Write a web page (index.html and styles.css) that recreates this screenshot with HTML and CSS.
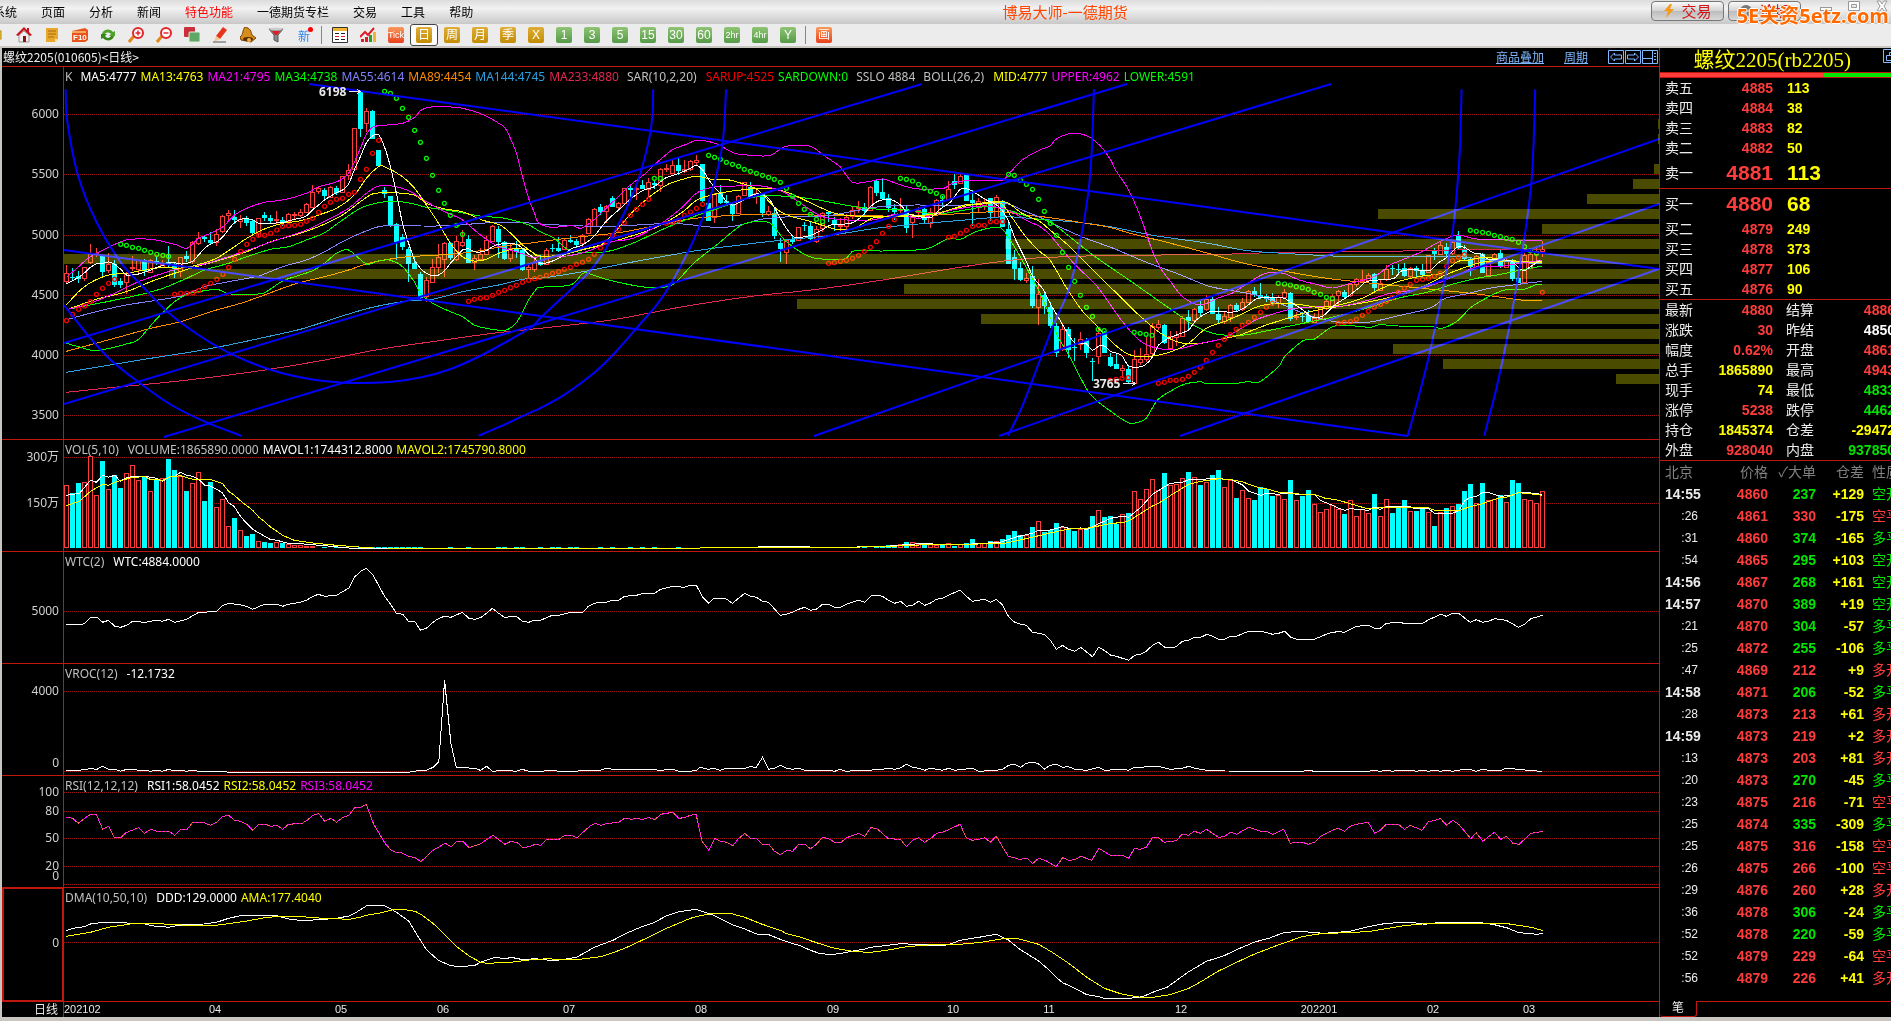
FILE: index.html
```
<!DOCTYPE html>
<html lang="zh-CN">
<head>
<meta charset="UTF-8">
<meta name="viewport" content="width=device-width, initial-scale=1.0">
<title>博易大师-一德期货</title>
<link rel="stylesheet" href="styles.css">
</head>
<body>

<header class="menubar">
    <nav class="menu">
        <button>系统</button>
        <button>页面</button>
        <button>分析</button>
        <button>新闻</button>
        <button class="hot">特色功能</button>
        <button>一德期货专栏</button>
        <button>交易</button>
        <button>工具</button>
        <button>帮助</button>
    </nav>
    <div class="app-title">博易大师-一德期货</div>
    <div class="top-buttons">
        <button class="pill"><svg width="12" height="16" viewBox="0 0 12 16"><path d="M7 1 1 8h4L3 15l8-9H7l2-5z" fill="#f59a1a"/></svg>交易</button>
        <button class="pill"><svg width="14" height="14" viewBox="0 0 14 14"><circle cx="7" cy="7" r="6" fill="#777"/><path d="M3 7h8M7 4v6" stroke="#ddd"/></svg>论坛</button>
    </div>
    <div class="window-buttons">
        <button aria-label="最小化"><svg width="14" height="12" viewBox="0 0 14 12"><rect x="1.5" y="7.5" width="11" height="3" fill="#fff" stroke="#999"/></svg></button>
        <button aria-label="最大化"><svg width="14" height="12" viewBox="0 0 14 12"><path d="M1.500 1.500h11v9h-11zM4.500 4.500h5v3h-5z" fill="#fff" fill-rule="evenodd" stroke="#999"/></svg></button>
        <button aria-label="关闭"><svg width="14" height="12" viewBox="0 0 14 12"><path d="M2 1h3l2 3 2-3h3L9 6l3 5H9L7 8l-2 3H2l3-5z" fill="#fff" stroke="#999"/></svg></button>
    </div>
    <div class="watermark">5E关资5etz.com</div>
</header>

<div class="toolbar">
    <button class="tool" aria-label="打开"><svg width="16" height="16"><rect x="1" y="4" width="12" height="8" fill="#f2c53d" stroke="#b98a10"/></svg></button>
    <button class="tool" aria-label="首页"><svg width="16" height="16"><path d="M3 8v7h10V8L8 4z" fill="#eee" stroke="#999"/><path d="M0 8 8 0l3 3V1h2v4l3 3-2 1-6-6-6 6z" fill="#c8131c"/><path d="M7 9h3v6H7z" fill="#8c1016"/></svg></button>
    <button class="tool" aria-label="公告"><svg width="16" height="16"><path d="M2 1h12v11l-3 3H2z" fill="#e8a82c"/><path d="M4 4h8M4 7h8M4 10h6" stroke="#a86c08"/><path d="M14 12h-3v3z" fill="#fbe2a0"/></svg></button>
    <button class="tool" aria-label="F10资料"><svg width="16" height="16"><path d="M0 4l13-3 3 2v10l-3 2H0z" fill="#e8541c"/><path d="M0 4h14v2H0z" fill="#f7a860"/><text x="1" y="13" class="icon-f10">F10</text></svg></button>
    <button class="tool" aria-label="刷新"><svg width="16" height="16"><path d="M2 7c1-5 8-6 11-2l2-1v5H9l2-2C9 5 6 5 5 7z" fill="#4fa52c"/><path d="M14 9c-1 5-8 6-11 2l-2 1V7h6L5 9c2 3 5 2 6 0z" fill="#348718"/></svg></button>
    <button class="tool" aria-label="放大"><svg width="16" height="16"><path d="M1 15l5-6" stroke="#e08a1c" stroke-width="3"/><circle cx="10" cy="6" r="5" fill="#fff" stroke="#e3262b" stroke-width="2"/><path d="M10 3.500v5M7.500 6h5" stroke="#e3262b" stroke-width="1.500"/></svg></button>
    <button class="tool" aria-label="缩小"><svg width="16" height="16"><path d="M1 15l5-6" stroke="#e08a1c" stroke-width="3"/><circle cx="10" cy="6" r="5" fill="#fff" stroke="#e3262b" stroke-width="2"/><path d="M7.500 6h5" stroke="#e3262b" stroke-width="1.500"/></svg></button>
    <button class="tool" aria-label="叠加"><svg width="16" height="16"><rect x="0" y="0" width="11" height="10" rx="1" fill="#cc2f3a"/><rect x="5" y="5" width="11" height="10" rx="1" fill="#5fa866" stroke="#ddeedd"/></svg></button>
    <button class="tool" aria-label="画线"><svg width="16" height="16"><path d="M4 9 11 0l4 3-7 9z" fill="#e8341c"/><path d="M4 9l4 3-6 3z" fill="#f4c98c"/><path d="M1 15h13" stroke="#555"/></svg></button>
    <button class="tool" aria-label="预警"><svg width="16" height="16"><path d="M5 0c5 1 6 4 7 8l4 3-5 4-10-2-1-3c4-3 2-7 5-10z" fill="#d58e1c" stroke="#7a4306"/><ellipse cx="8" cy="12" rx="5" ry="2" fill="#5d2d05"/><circle cx="9" cy="13" r="2" fill="#f5b53a"/></svg></button>
    <button class="tool" aria-label="筛选"><svg width="16" height="16"><path d="M1 2h14l-5 6v7l-4-2V8z" fill="#888" stroke="#555"/><path d="M4 4h8L9 8H7z" fill="#e01c24"/><ellipse cx="8" cy="2" rx="7" ry="1.500" fill="#ccc"/></svg></button>
    <button class="tool new">新</button>
    <span class="sep"></span>
    <button class="tool" aria-label="报价"><svg width="16" height="16"><path d="M.5.500h15v15H.500z" fill="#fff" stroke="#333"/><path d="M1 1h14v3H1z" fill="#f0b52c"/><path d="M3 6.500h4M3 12.500h4M9 6.500h4M9 12.500h4" stroke="#222"/><path d="M3 9.500h4M9 9.500h4" stroke="#e01c24"/></svg></button>
    <button class="tool" aria-label="分时"><svg width="16" height="16"><path d="M1 15v-3h3v3zM5 15v-5h3v5z" fill="#e01c24"/><path d="M9 15V8h3v7z" fill="#2f9b2f"/><path d="M13 15V5h3v10z" fill="#f0b52c"/><path d="M0 10l5-5 3 3 6-7" fill="none" stroke="#e01c24" stroke-width="2"/></svg></button>
    <button class="tool"><span class="key red narrow">Tick</span></button>
    <button class="tool selected"><span class="key gold">日</span></button>
    <button class="tool"><span class="key gold">周</span></button>
    <button class="tool"><span class="key gold">月</span></button>
    <button class="tool"><span class="key gold">季</span></button>
    <button class="tool"><span class="key gold">X</span></button>
    <button class="tool"><span class="key green">1</span></button>
    <button class="tool"><span class="key green">3</span></button>
    <button class="tool"><span class="key green">5</span></button>
    <button class="tool"><span class="key green">15</span></button>
    <button class="tool"><span class="key green">30</span></button>
    <button class="tool"><span class="key green">60</span></button>
    <button class="tool"><span class="key green narrow">2hr</span></button>
    <button class="tool"><span class="key green narrow">4hr</span></button>
    <button class="tool"><span class="key green">Y</span></button>
    <span class="sep"></span>
    <button class="tool"><span class="key red">画</span></button>
</div>

<main class="workspace">
    <section class="charts">
        <div class="chart-title">
            <span>螺纹2205(010605)&lt;日线&gt;</span>
            <a class="overlay-link" href="#">商品叠加</a>
            <a class="period-link" href="#">周期</a>
            <div class="nav-icons">
                <button aria-label="上一个"><svg width="16" height="14"><path d="M.5.500h15v13H.500zM2.500 7l4-4v2h7v4h-7v2z"/></svg></button>
                <button aria-label="下一个"><svg width="16" height="14"><path d="M.5.500h15v13H.500zM13.500 7l-4-4v2h-7v4h7v2z"/></svg></button>
                <button aria-label="布局"><svg width="16" height="14"><path d="M.5.500h15v13H.500zM.5 8.500h10M10.500.500v13M12 3.500h2M12 6.500h2M12 9.500h2"/></svg></button>
            </div>
        </div>

        <div class="panel price">
            <svg class="axis" id="price-axis"></svg>
            <div class="plot">
                <svg id="price"></svg>
                <div class="legend">
                    <span class="gray">K</span>
                    <span class="white lead">MA5:4777</span>
                    <span class="yellow">MA13:4763</span>
                    <span class="magenta">MA21:4795</span>
                    <span class="lime">MA34:4738</span>
                    <span class="violet">MA55:4614</span>
                    <span class="orange">MA89:4454</span>
                    <span class="azure">MA144:4745</span>
                    <span class="crimson">MA233:4880</span>
                    <span class="gray lead params">SAR(10,2,20)</span>
                    <span class="pure-red">SARUP:4525</span>
                    <span class="lime">SARDOWN:0</span>
                    <span class="gray lead">SSLO 4884</span>
                    <span class="gray lead params">BOLL(26,2)</span>
                    <span class="yellow">MID:4777</span>
                    <span class="magenta">UPPER:4962</span>
                    <span class="lime">LOWER:4591</span>
                </div>
            </div>
        </div>

        <div class="panel">
            <svg class="axis" id="vol-axis"></svg>
            <div class="plot">
                <svg id="vol"></svg>
                <div class="legend">
                    <span class="gray params">VOL(5,10)</span>
                    <span class="gray">VOLUME:1865890.0000</span>
                    <span class="white">MAVOL1:1744312.8000</span>
                    <span class="yellow">MAVOL2:1745790.8000</span>
                </div>
            </div>
        </div>

        <div class="panel">
            <svg class="axis" id="wtc-axis"></svg>
            <div class="plot">
                <svg id="wtc"></svg>
                <div class="legend">
                    <span class="gray params">WTC(2)</span>
                    <span class="white">WTC:4884.0000</span>
                </div>
            </div>
        </div>

        <div class="panel">
            <svg class="axis" id="vroc-axis"></svg>
            <div class="plot">
                <svg id="vroc"></svg>
                <div class="legend">
                    <span class="gray params">VROC(12)</span>
                    <span class="white">-12.1732</span>
                </div>
            </div>
        </div>

        <div class="panel">
            <svg class="axis" id="rsi-axis"></svg>
            <div class="plot">
                <svg id="rsi"></svg>
                <div class="legend">
                    <span class="gray params">RSI(12,12,12)</span>
                    <span class="white">RSI1:58.0452</span>
                    <span class="yellow">RSI2:58.0452</span>
                    <span class="magenta">RSI3:58.0452</span>
                </div>
            </div>
        </div>

        <div class="panel dma active">
            <svg class="axis" id="dma-axis"></svg>
            <div class="plot">
                <svg id="dma"></svg>
                <div class="legend">
                    <span class="gray params">DMA(10,50,10)</span>
                    <span class="white">DDD:129.0000</span>
                    <span class="yellow">AMA:177.4040</span>
                </div>
            </div>
        </div>

        <div class="dates">
            <span class="dates-name">日线</span>
            <svg id="dates"></svg>
        </div>
    </section>

    <aside class="quote">
        <div class="quote-title">
            <h1>螺纹2205(rb2205)</h1>
            <svg width="16" height="14"><path d="M.5.500h15v13H.500zM3.500 11.500v-5h9v5zM6.500 6.500v-3h5"/></svg>
        </div>
        <div class="ratio"><span></span></div>

        <div class="book" id="asks"></div>
        <div class="book" id="bids"></div>
        <div class="stats" id="stats"></div>

        <table class="ticks">
            <thead>
                <tr><th class="time">北京</th><th class="deal">价格</th><th class="size">✓大单</th><th class="diff">仓差</th><th class="kind">性质</th></tr>
            </thead>
            <tbody id="ticks"></tbody>
        </table>

        <div class="tabs">
            <button class="tab">笔</button>
        </div>
    </aside>
</main>

<script src="chart.js"></script>
</body>
</html>
```
FILE: styles.css
```
* {
    box-sizing: border-box;
}

body {
    margin: 0;
    background-color: #c9c5c1;
    font-family: 'Noto Sans', 'Noto Sans CJK SC', sans-serif;
    font-size: 12px;
    overflow: hidden;
}

button {
    border: 0;
    padding: 0;
    margin: 0;
    background: none;
    font-family: inherit;
    font-size: inherit;
    color: inherit;
}

svg {
    display: block;
}

/* menu */

.menubar {
    position: relative;
    display: flex;
    align-items: center;
    height: 24px;
    background: linear-gradient(#dcdcdc, #f2f2f2 35%, #c8c8c8);
}

.menu {
    display: flex;
    gap: 24px;
    margin-left: -7px;
    font-family: 'Noto Sans CJK SC', sans-serif;
    color: #000;
}

.menu button {
    line-height: 24px;
}

.menu .hot {
    color: #ff0000;
}

.app-title {
    flex: 1;
    padding-left: 6px;
    text-align: center;
    font-family: 'Noto Sans CJK SC', sans-serif;
    font-size: 15px;
    line-height: 24px;
    color: #ff4500;
}

.top-buttons {
    display: flex;
    gap: 4px;
    align-self: flex-start;
    padding-top: 1px;
    margin-right: 18px;
}

.pill {
    display: flex;
    align-items: center;
    justify-content: center;
    gap: 6px;
    width: 73px;
    height: 20px;
    border: 1px solid #777;
    border-radius: 4px;
    background: linear-gradient(#fafafa, #d2d2d2 50%, #bdbdbd 52%, #d8d8d8);
    font-family: 'Noto Sans CJK SC', sans-serif;
    font-size: 15px;
    line-height: 18px;
    color: #d01818;
}

.window-buttons {
    display: flex;
    gap: 14px;
    align-self: flex-start;
    padding-right: 2px;
}

.watermark {
    position: absolute;
    right: 2px;
    top: 2px;
    font-family: 'Open Sans', 'Noto Sans CJK SC', sans-serif;
    font-size: 20px;
    line-height: 28px;
    font-weight: bold;
    color: #ff6a00;
    text-shadow: 1px 0 #fff, -1px 0 #fff, 0 1px #fff, 0 -1px #fff;
}

/* toolbar */

.toolbar {
    display: flex;
    align-items: center;
    height: 24px;
    margin-left: -18px;
    background-color: #ececec;
    border-bottom: 2px solid #c9c5c1;
}

.tool {
    display: flex;
    align-items: center;
    justify-content: center;
    width: 28px;
    height: 22px;
}

.tool.selected {
    border: 1px solid #444;
    border-radius: 3px;
    background-color: #fff;
}

.tool.new {
    position: relative;
    font-family: 'Noto Sans CJK SC', sans-serif;
    color: #2f86e8;
}

.tool.new::after {
    content: '';
    position: absolute;
    right: 5px;
    top: 3px;
    width: 5px;
    height: 5px;
    border-radius: 50%;
    background-color: #ff0000;
}

.sep {
    width: 1px;
    height: 18px;
    margin: 0 4px 0 3px;
    background-color: #888;
}

.key {
    display: flex;
    align-items: center;
    justify-content: center;
    width: 16px;
    height: 16px;
    border-radius: 2px;
    font-family: 'Liberation Sans', 'Noto Sans CJK SC', sans-serif;
    line-height: 16px;
    color: #fff;
}

.key.narrow {
    font-size: 9px;
}

.gold {
    background: linear-gradient(#dfae38, #c28c04);
}

.green {
    background: linear-gradient(#8fc474, #559a48);
}

.red {
    background: linear-gradient(#f99a5c, #e8401c);
}

.icon-f10 {
    font-family: 'Liberation Sans', sans-serif;
    font-size: 8px;
    font-weight: bold;
    fill: #fff;
}

/* charts */

.workspace {
    display: flex;
    padding-left: 2px;
    padding-bottom: 4px;
}

.charts {
    flex: 1;
    min-width: 0;
    background-color: #000;
}

.chart-title {
    display: flex;
    align-items: center;
    height: 18px;
    padding: 0 1px;
    font-family: 'Noto Sans CJK SC', sans-serif;
    line-height: 18px;
    color: #f0f0f0;
}

.overlay-link {
    margin-left: auto;
}

.chart-title a {
    color: #80b8ff;
    margin-right: 20px;
}

.nav-icons {
    display: flex;
    gap: 1px;
}

.nav-icons path,
.quote-title path {
    fill: none;
    stroke: #80b8ff;
}

.panel {
    display: flex;
    height: 112px;
    border-top: 1px solid #c01810;
}

.panel.price {
    height: 373px;
}

.panel.dma {
    height: 114px;
}

.axis {
    width: 62px;
    height: 100%;
    border-right: 1px solid #c01810;
}

.active .axis {
    border: 2px solid #c01810;
    border-top-width: 1px;
    border-bottom-width: 1px;
}

.plot {
    position: relative;
    flex: 1;
    min-width: 0;
}

.plot > svg {
    width: 100%;
    height: 100%;
    shape-rendering: crispEdges;
}

.legend {
    position: absolute;
    left: 1px;
    top: 1px;
    display: flex;
    gap: 4px;
    line-height: 18px;
    white-space: nowrap;
}

.legend .lead {
    margin-left: 4px;
}

.legend .params {
    margin-right: 5px;
}

.axis text {
    font-size: 12px;
    fill: #d0d0d0;
    text-anchor: end;
}

.callout {
    font-size: 12px;
    font-weight: bold;
    fill: #e8e8e8;
}

.arrow {
    stroke: #e8e8e8;
    fill: none;
}

.grid {
    stroke: #a01010;
    stroke-dasharray: 1 1;
}

.up {
    fill: #000;
    stroke: #ff3c3c;
}

.up-wick {
    fill: #ff3c3c;
}

.down {
    fill: #00ffff;
}

.line {
    fill: none;
    stroke: currentColor;
}

.dots {
    fill: none;
    stroke: currentColor;
    stroke-width: 1.2;
    shape-rendering: auto;
}

.drawn {
    fill: none;
    stroke: #0000ff;
    stroke-width: 2;
    shape-rendering: auto;
}

.profile {
    fill: #4b4b00;
    mix-blend-mode: screen;
}

.dashed {
    stroke-dasharray: 2 2;
}

.gray { color: #c0c0c0; }
.white { color: #ffffff; }
.yellow { color: #ffff00; }
.magenta { color: #ff00ff; }
.lime { color: #00ff00; }
.violet { color: #8080ff; }
.orange { color: #ff8c00; }
.azure { color: #2ca0e0; }
.crimson { color: #e02850; }
.pure-red { color: #ff0000; }
.pink { color: #ff6464; }
.rise { color: #ff3c3c; }
.fall { color: #00e600; }

.dates {
    display: flex;
    height: 16px;
    border-top: 1px solid #c01810;
    color: #e8e8e8;
}

.dates-name {
    width: 62px;
    padding-right: 5px;
    text-align: right;
    line-height: 15px;
    border-right: 1px solid #c01810;
}

#dates {
    flex: 1;
    height: 15px;
}

#dates text {
    font-family: 'Liberation Sans', sans-serif;
    font-size: 11px;
    fill: #e8e8e8;
    text-anchor: middle;
}

#dates .first {
    text-anchor: start;
}

/* quote */

.quote {
    width: 232px;
    overflow: hidden;
    background-color: #000;
    border-left: 1px solid #c01810;
    font-family: 'Liberation Sans', 'Noto Sans CJK SC', sans-serif;
    font-size: 14px;
    line-height: 20px;
    color: #ececec;
}

.quote-title {
    display: flex;
    justify-content: flex-end;
    align-items: flex-start;
    gap: 32px;
    height: 24px;
    padding-top: 1px;
    margin-right: -8px;
}

.quote-title h1 {
    margin: 0;
    font-family: 'Liberation Serif', 'Noto Sans CJK SC', serif;
    font-size: 21px;
    line-height: 22px;
    font-weight: normal;
    white-space: nowrap;
    color: #ffff00;
}

.ratio {
    height: 6px;
    border: solid #c01810;
    border-width: 1px 0;
    background-color: #00e600;
}

.ratio span {
    display: block;
    width: 71%;
    height: 4px;
    background-color: #ff3c3c;
}

.book {
    padding-left: 5px;
    border-bottom: 1px solid #c01810;
}

.book div {
    display: flex;
    align-items: center;
    height: 20px;
}

.book .deal {
    width: 80px;
    text-align: right;
    font-weight: bold;
}

.book .size {
    padding-left: 14px;
    font-weight: bold;
}

.book .best {
    height: 30px;
}

.best .deal,
.best .size {
    font-size: 21px;
}

.stats {
    display: grid;
    grid-template-columns: 28px 80px 42px 80px;
    padding-left: 5px;
    border-bottom: 1px solid #c01810;
}

.stats b {
    text-align: right;
}

.stats span:nth-child(4n+3) {
    padding-left: 13px;
}

.ticks {
    width: 248px;
    table-layout: fixed;
    border-collapse: collapse;
    line-height: 22px;
    white-space: nowrap;
}

.ticks td,
.ticks th {
    padding: 0;
    text-align: right;
    font-weight: bold;
}

.ticks th {
    font-weight: normal;
    color: #808080;
}

.ticks .time {
    width: 50px;
    padding-left: 5px;
    text-align: left;
}

.ticks .second {
    padding: 0 12px 0 0;
    text-align: right;
    font-weight: normal;
    font-size: 12px;
}

.ticks .deal {
    width: 58px;
}

.ticks .size,
.ticks .diff {
    width: 48px;
}

.ticks .kind {
    padding-left: 8px;
    text-align: left;
    font-weight: normal;
}

.tabs {
    display: flex;
    height: 16px;
    margin-top: 12px;
}

.tabs::after {
    content: '';
    flex: 1;
    border-top: 1px solid #c01810;
}

.tab {
    width: 37px;
    border: 1px solid #c01810;
    border-width: 0 1px 1px 0;
    border-radius: 0 0 3px 3px;
    font-size: 12px;
    line-height: 15px;
}
```
FILE: chart.js
```
// Every panel keeps its points in spans: [first pixel, units per pixel].
// y is stored in thirds of a pixel, `top` is the panel's own offset.
const AXIS = 64;
const STEP = 6;
const panels = {
    price: { top: 7, spans: [[0, 2.8], [540, 2.8], [1050, 2.529]] },
    vol: { top: 10, spans: [[0, 2.24], [700, 1.6333]] },
    wtc: { top: 122, spans: [[0, 2.24], [700, 1.6333]] },
    vroc: { top: 234, spans: [[0, 2.24], [700, 1.6333]] },
    rsi: { top: 6, spans: [[0, 1.889], [800, 1.8233]] },
    dma: { top: 118, spans: [[0, 1.889], [800, 1.8233]] }
};

// u = up, d = down; body top, body bottom, high, low
const candles = `u638,664,615,672 d650,654,625,660 d648,657,632,668 u622,655,620,662 u580,605,552,612 u580,583,565,590
d588,635,588,655 u612,631,580,640 d612,674,600,680 d662,674,655,683 u640,667,635,703 u621,623,587,633 u601,628,600,640
d600,632,598,648 u601,636,598,640 d604,610,590,616 u612,620,600,625 d605,612,558,625 d612,627,605,654 u592,632,590,650
d588,598,572,605 u547,602,543,612 u534,549,516,556 d532,536,525,545 d540,548,515,555 u522,547,508,558 u469,514,465,520
u460,466,450,480 d470,479,450,492 u478,482,465,504 d477,490,468,497 d483,518,480,528 u475,520,473,530 d466,475,455,483
d474,482,465,490 u478,481,453,492 d480,488,472,497 u463,484,460,488 u462,465,455,478 u455,465,448,470 u433,455,430,458
u397,440,375,442 u385,394,380,402 d389,408,385,416 u382,410,377,415 d384,398,378,405 u349,397,347,400 u331,345,312,360
u205,326,203,328 d93,206,90,230 u152,188,145,215 d153,236,150,238 d270,317,270,317 d390,403,381,415 d408,495,408,500
d492,545,490,600 d532,562,522,570 d567,611,560,665 d610,626,592,628 d642,713,636,718 u661,708,650,725 u620,665,598,666
u590,622,552,638 u550,596,547,651 d549,594,545,600 u544,596,528,604 u545,556,510,560 d537,608,525,610 u594,607,585,629
u583,598,565,603 u541,581,528,583 u498,542,495,543 d507,547,497,593 d547,596,543,600 u565,595,548,607 d565,575,543,595
d569,630,567,633 u622,626,615,657 u605,626,590,636 d605,614,585,618 u570,613,565,615 d563,567,553,575 d564,572,530,577
u541,568,537,570 d540,545,525,550 d543,555,538,565 u525,550,523,568 u478,518,475,522 u446,497,443,500 d441,455,432,465
u438,452,434,488 d414,440,408,442 u430,440,425,452 u385,430,383,432 d384,391,372,410 u383,386,375,420 d375,386,360,388
u367,388,355,415 d369,374,360,388 u328,376,325,395 u325,328,312,335 u316,338,300,342 d315,332,292,345 u328,334,300,340
u304,328,300,334 u300,306,286,315 d312,423,312,430 d430,482,425,484 u401,472,398,488 d398,428,375,432 d424,430,405,437
d432,461,428,482 u409,458,405,460 u367,406,365,408 d380,410,365,412 u400,404,390,432 d402,459,398,470 u452,462,438,468
d460,527,448,536 d550,566,535,605 u540,575,537,612 d536,545,525,553 u502,540,500,543 d495,499,486,512 d498,537,486,540
u507,542,498,550 u460,505,455,517 d457,463,453,485 d480,494,470,512 u495,498,475,514 u470,497,462,510 u450,467,440,478
u440,445,423,460 d442,452,430,468 u382,450,378,452 d363,399,360,408 d396,418,354,420 d415,443,402,455 d445,456,432,480
u447,450,415,460 d448,504,438,520 u466,487,462,534 u450,457,440,475 d447,481,444,492 u455,488,445,504 u421,455,417,457
d420,426,408,440 u388,418,363,420 d364,374,342,386 u349,370,343,372 d342,422,342,424 d420,428,391,498 u423,440,415,455
u425,435,415,450 d415,458,413,482 u412,470,405,472 d422,500,420,502 d507,611,490,612 d592,627,570,660 d625,660,605,662
u655,661,640,668 d648,738,618,745 u703,742,657,795 d705,738,695,762 d740,797,725,803 d797,879,790,890 u808,868,790,872
d808,869,800,895 d860,863,835,902 u838,852,816,870 d840,880,833,895 d903,906,895,962 u820,888,805,912 d816,879,812,880
d891,917,880,922 d912,927,880,928 u925,929,915,955 d927,965,918,968 u896,968,870,970 u898,907,865,915 u883,898,830,905
u798,880,790,884 u793,801,780,810 d795,850,792,852 u828,865,812,868 u825,830,812,858 u775,827,768,828 d771,783,750,808
u747,780,744,790 d738,760,720,768 u718,748,705,752 d717,762,712,763 d762,780,740,788 u768,782,757,792 u736,770,733,785
d735,750,728,755 u727,748,715,752 u694,727,690,730 d693,705,682,712 d705,715,670,718 d708,716,702,725 d710,728,700,735
u710,728,706,743 u696,710,688,714 d699,776,697,783 u768,771,755,780 d767,772,755,787 d765,785,750,790 u773,785,758,788
u742,776,738,780 u722,744,718,750 u707,740,702,742 u694,706,690,735 d696,710,690,713 u673,706,668,710 u658,673,655,680
u657,662,630,668 u645,660,640,668 d642,685,638,698 u670,689,660,692 u628,657,615,662 d625,628,615,645 d627,630,612,640
d624,647,608,652 u625,648,620,655 d624,632,618,652 d634,645,612,650 u586,636,584,640 d573,582,565,600 u556,583,545,585
d560,582,548,590 u545,578,540,585 d528,563,512,568 d567,597,555,600 d597,621,590,647 u587,620,584,627 d582,638,580,640
u605,645,602,648 u581,600,578,605 d579,618,568,625 u600,620,595,625 d600,656,598,662 d653,668,640,670 u585,665,580,670
u583,625,565,628 u574,582,560,600 u568,574,543,590`.split(/\s+/).map(c => ({
    up: c[0] === 'u',
    y: c.slice(1).split(',').map(Number)
}));

const volumeStart = [166, 190, 159, 157, 79, 196, 94, 178, 136, 174, 130, 106, 151, 139, 184, 146, 145, 87, 120, 137, 183, 160,
    127, 213, 156, 230, 208, 289, 264, 301, 318, 312, 334, 336, 339, 337, 338, 343, 346, 346, 348, 348, 350];
const volumeEnd = [346, 346, 343, 336, 337, 341, 341, 343, 346, 343, 340, 348, 342, 340, 327, 340, 338, 333, 333, 327, 315, 303,
    315, 316, 291, 274, 306, 300, 279, 290, 296, 303, 296, 297, 258, 241, 261, 258, 282, 253, 249, 184, 208, 178, 148, 180,
    129, 166, 163, 145, 126, 142, 165, 155, 135, 120, 172, 150, 204, 181, 205, 210, 171, 177, 198, 195, 208, 150, 211, 198,
    180, 223, 247, 238, 226, 238, 252, 211, 259, 237, 250, 192, 259, 208, 249, 235, 210, 244, 243, 237, 247, 288, 247, 234,
    229, 222, 183, 162, 220, 159, 211, 208, 196, 217, 150, 159, 208, 211, 220, 184];
// contract was hardly traded in between
const quiet = candles.length - volumeStart.length - volumeEnd.length;
const volumes = [...volumeStart, ...Array(quiet).fill(351), ...volumeEnd];

const averages = {
    crimson: [
        '186,997 320,982 456,968 590,952 741,930 909,900 1026,875 1110,860 1244,840 1379,820',
        '0,805 200,780 400,740 600,708 760,690 960,660 1140,628 1300,603 1400,593',
        '0,592 160,586 400,584 560,578 800,575 1030,570 1245,568'],
    azure: [
        '186,937 320,913 422,895 540,875 640,855 741,832 841,808 909,785 976,762 1043,742 1144,722 1211,718 1295,695 1396,675 1463,658',
        '0,655 120,635 240,610 340,590 450,570 560,555 680,540 800,528 940,505 1060,492 1190,480 1300,470 1360,474',
        '0,480 80,488 160,502 260,526 400,550 500,572 620,582 760,590 900,590 1030,590 1110,600 1245,612'],
    orange: [
        '186,874 354,825 422,805 506,785 590,755 674,730 741,705 825,672 909,650 976,630 1026,612 1077,600 1144,590 1261,583 1345,572 1413,558 1480,550',
        '0,545 100,532 220,518 320,498 400,480 480,470 560,465 660,462 800,466 960,468 1060,468 1160,462 1280,455 1360,465',
        '0,473 90,490 150,502 210,522 300,548 400,580 490,610 600,635 700,655 800,668 900,680 1010,693 1100,705 1190,720 1245,721'],
    violet: [
        '190,778 280,752 354,735 430,722 506,708 573,680 640,665 724,648 791,620 858,600 909,575 959,545 1009,520 1060,500 1110,496 1180,498 1260,497 1345,490 1413,487 1480,489',
        '0,492 120,498 220,498 320,492 400,492 500,503 560,495 620,478 700,470 800,468 870,455 950,440 1050,435 1160,437 1240,430 1310,432 1350,450 1400,472',
        '0,487 80,530 160,565 240,605 320,640 400,678 450,690 520,705 580,730 640,760 690,778 740,788 810,786 870,770 960,745 1000,715 1060,700 1110,685 1170,675 1245,664'],
    lime: [
        '190,748 300,725 388,705 456,685 523,655 573,630 640,610 691,590 758,568 808,560 858,540 909,518 959,480 1009,445 1060,428 1110,424 1160,432 1194,442 1261,452 1345,468 1413,475 1480,495',
        '0,515 40,535 80,570 140,578 200,572 270,545 350,505 430,470 500,445 570,418 630,408 710,410 780,420 870,438 950,448 1030,450 1110,462 1190,450 1250,440 1310,450 1380,475',
        '0,485 60,540 120,595 200,660 260,710 320,760 370,800 420,822 490,825 550,812 640,790 720,770 800,745 880,715 960,695 1020,672 1080,655 1130,645 1200,628 1245,618'],
    'yellow mid': [
        '190,748 270,718 354,695 422,665 489,640 556,618 624,598 691,575 758,545 825,525 892,500 959,465 1009,425 1043,402 1094,398 1160,405 1194,430 1245,447 1295,455 1350,480 1400,495 1430,520 1463,555 1490,576',
        '0,590 80,580 180,552 250,530 330,500 400,455 440,420 500,400 580,388 640,385 700,400 760,430 820,458 880,468 1000,468 1080,470 1150,450 1220,432 1300,425 1350,460 1400,485',
        '0,510 50,560 100,620 160,690 220,760 280,820 330,848 380,850 430,838 480,825 540,798 600,775 640,760 700,745 760,735 830,720 900,700 960,670 1000,645 1050,622 1100,605 1170,603 1245,605'],
    magenta: [
        '190,748 253,730 320,700 388,665 456,640 506,625 573,612 640,590 708,565 775,540 858,510 925,475 976,445 1026,400 1060,378 1094,377 1144,392 1194,425 1245,455 1295,480 1345,525 1396,560 1446,575 1490,592',
        '0,590 60,590 130,575 200,545 260,535 340,490 400,440 440,398 490,380 550,378 620,378 680,395 730,430 790,470 860,480 930,480 1000,462 1060,475 1120,458 1190,443 1250,438 1310,450 1360,480 1400,500',
        '0,525 60,610 120,680 180,780 225,840 265,863 320,868 380,850 430,838 470,815 520,780 570,760 620,745 680,740 740,738 800,722 860,700 920,690 980,670 1040,640 1080,620 1130,620 1190,610 1245,600'],
    yellow: [
        '186,735 220,695 253,668 304,645 354,640 405,630 456,622 500,625 540,618 600,598 640,572 691,535 741,507 791,490 842,482 892,465 942,445 992,405 1026,355 1060,320 1077,320 1127,350 1161,385 1194,435 1228,490 1261,550 1295,590 1328,603 1362,598 1396,580 1446,565 1480,570',
        '0,588 60,585 120,568 170,555 210,515 260,455 310,408 360,372 410,355 440,348 480,358 520,358 570,372 610,390 660,445 700,468 760,485 830,508 880,505 930,475 980,470 1030,465 1080,465 1130,455 1190,435 1240,432 1290,430 1320,470 1360,530 1400,575',
        '0,600 40,680 80,750 120,800 160,850 198,883 243,890 300,878 350,850 395,805 440,785 480,765 530,738 590,730 640,735 680,742 730,735 790,715 830,690 880,665 940,648 990,640 1030,605 1060,600 1100,592 1150,600 1200,605 1245,608'],
    'magenta upper': [
        '186,652 220,620 253,590 304,562 354,540 422,538 489,553 523,565 556,535 590,520 624,500 657,465 691,445 741,427 791,420 858,400 892,380 942,366 976,340 1009,265 1026,222 1043,202 1060,197 1127,190 1161,172 1177,152 1200,142 1240,140 1295,145 1362,168 1396,190 1413,202 1429,235 1446,280 1463,350 1480,415 1497,460',
        '-5,487 30,502 90,497 115,505 150,480 200,430 250,378 290,345 330,305 370,270 410,253 440,241 490,250 530,272 555,282 640,287 680,262 715,256 760,260 800,290 840,320 875,367 920,365 960,357 1010,375 1060,387 1130,385 1150,372 1190,362 1290,362 1310,345 1350,300 1400,270',
        '0,258 15,238 50,221 90,226 125,255 152,297 167,332 195,382 213,425 235,490 258,570 280,625 305,665 335,710 380,735 430,712 460,700 500,670 545,640 590,640 630,660 680,675 715,684 760,670 820,650 860,615 890,600 940,575 980,548 1030,525 1080,537 1200,541 1245,540'],
    'lime lower': [
        '186,850 220,860 270,872 354,852 388,838 440,775 489,725 523,703 556,695 607,688 640,701 700,703 741,698 791,663 841,645 875,632 909,610 942,580 976,570 1026,612 1060,602 1094,601 1127,620 1160,665 1177,700 1211,730 1261,755 1295,770 1328,795 1362,805 1413,811 1446,788 1480,720 1500,690',
        '0,682 85,675 120,640 140,642 200,662 300,682 370,675 430,610 500,550 560,498 600,485 645,490 690,545 760,592 850,597 880,572 960,573 1080,567 1140,537 1180,537 1220,515 1285,502 1310,530 1350,600 1400,700',
        '0,770 20,830 50,890 100,1000 155,1055 198,1088 213,1090 243,1075 274,1018 335,975 380,965 395,970 470,970 500,965 530,965 578,920 593,890 640,842 668,838 714,800 760,797 810,802 835,794 880,798 960,799 990,805 1030,783 1065,742 1110,710 1150,690 1200,688 1230,673 1245,673'],
    white: [
        '186,671 203,662 220,652 237,638 253,622 270,612 287,610 304,606 321,613 338,628 354,645 371,645 388,642 405,637 422,630 439,622 456,616 472,608 489,608 506,612 523,610 540,603 556,585 573,565 590,552 607,545 624,530 640,508 657,488 674,478 691,476 708,480 724,490 741,490 791,488 808,482 842,474 858,468 875,450 892,435 909,420 942,398 959,390 976,372 992,330 1009,290 1026,248 1043,228 1060,224 1077,262 1093,320 1110,400 1127,490 1144,550 1161,600 1177,625 1194,640 1211,647 1228,645 1245,632 1261,610 1278,590 1295,570 1312,567 1328,575 1345,576 1362,572 1379,560 1396,553 1429,550 1446,553 1463,565 1480,582 1497,595',
        '0,610 30,605 60,590 90,565 119,555 150,530 186,483 220,450 253,418 287,392 320,380 350,355 390,340 421,325 438,316 455,330 472,358 488,382 505,400 522,425 540,435 570,420 600,403 625,405 645,422 665,460 690,505 710,530 730,532 760,525 790,510 815,495 870,490 900,470 925,440 950,422 980,418 1010,435 1030,460 1060,470 1095,472 1120,448 1150,425 1177,388 1200,388 1220,400 1250,420 1285,440 1310,480 1330,535 1360,600 1380,650 1410,690',
        '0,730 20,770 50,830 65,850 90,850 107,870 125,858 140,860 155,875 180,885 198,917 220,922 240,915 260,890 275,855 300,835 320,825 350,810 370,780 400,757 430,753 460,757 490,745 520,718 550,712 590,714 610,728 640,750 660,770 690,768 720,735 750,712 780,685 800,665 830,660 870,655 890,632 930,630 960,632 980,610 1000,595 1030,562 1048,562 1070,578 1090,582 1110,598 1150,600 1170,605 1190,628 1200,632 1215,620 1240,600']
};

const sar = {
    'pure-red': [
        '186,782 203,763 220,748 237,738 253,725 270,703 287,685 304,670 321,658 489,703 506,700 523,700 540,698 556,692 573,680 590,670 607,658 624,643 640,622 657,598 674,574 691,553 708,538 724,526 741,526 758,520 775,510 791,499 808,497 825,496 842,493 858,484 875,475 892,457 909,439 925,427 942,418 959,415 976,403 992,397 1009,358 1026,328 1043,280 1060,241 1312,724 1328,718 1345,715 1362,713 1379,706 1396,697 1413,691 1429,683 1446,676 1463,667 1480,661 1497,656',
        '0,652 18,646 35,640 52,635 68,628 85,622 102,613 119,607 136,598 152,583 169,564 186,546 203,526 220,508 236,488 253,466 270,448 287,433 304,418 354,490 371,487 388,480 404,466 421,456 438,445 455,433 808,610 824,608 841,604 858,601 875,595 892,586 908,574 925,562 942,545 959,520 976,499 992,479 1144,532 1160,529 1177,520 1194,511 1211,499 1228,496 1244,496 1261,485 1278,485 1295,485',
        '152,961 167,958 182,955 198,953 274,970 289,967 304,961 319,961 335,958 350,949 365,937 380,922 395,901 411,877 426,856 441,838 456,824 471,808 486,796 502,787 517,772 532,757 547,742 562,730 729,790 744,787 760,785 775,778 790,766 805,754 820,742 836,733 851,724 866,712 881,697 896,685 911,673 927,661 942,658 957,655 972,649 987,640 1003,619 1018,602 1033,592 1048,583 1245,697'],
    lime: [
        '338,553 354,556 371,562 388,565 405,571 422,577 439,583 456,586 472,589 1077,94 1093,100 1110,115 1127,145 1144,172 1161,211 1177,247 1194,295 1211,346 1228,391 1244,430 1261,466 1278,496 1295,523',
        '320,355 337,355 472,286 489,292 505,298 522,307 539,313 556,319 572,328 589,334 606,340 623,346 640,352 656,358 673,367 690,385 707,409 724,430 740,448 757,463 774,478 791,485 1009,355 1026,358 1043,363 1060,373 1076,385 1093,394 1110,400 1127,410 1312,343 1328,346 1345,361 1362,373 1379,388 1396,418 1412,454 1429,490 1446,526 1463,577 1480,622 1497,664 1513,706 1530,742 1547,769',
        '122,808 137,812 213,817 228,820 243,823 258,826 577,670 593,672 608,675 623,680 638,683 653,688 668,697 684,703 699,712 714,716 1063,511 1078,514 1094,517 1109,520 1124,526 1139,530 1154,535 1169,538 1185,547 1200,560 1215,572 1230,580']
};

// trend lines and speed arcs
const trends = [
    [309, 84, 1659, 269], [64, 250, 1408, 436], [64, 343, 922, 84], [64, 404, 1127, 84],
    [164, 437, 1331, 84], [814, 436, 1659, 139], [999, 436, 1659, 204], [1180, 436, 1659, 269]
];
const arcs = [
    ['184,88 188,180 218,345 272,490 340,610 400,680 470,757 560,828 650,883 760,930 870,958 960,968 1080,967 1180,952 1260,928 1350,885 1440,832 1490,800',
        '0,775 60,715 130,645 180,575 203,525 240,450 275,360 305,240 315,165 317,88'],
    ['179,735 248,828 310,900 390,968 480,1035 580,1088 675,1127'],
    ['1340,1127 1400,1100 1480,1060', '0,1045 70,1003 150,940 210,878 270,805 330,730 370,665 430,540 480,400 505,290 515,210 521,88'],
    ['', '1310,1127 1350,1040 1400,900 1440,790 1480,690 1510,560 1535,400 1545,270 1551,88'],
    ['', '', '905,1127 930,1020 960,880 1000,650 1020,500 1030,380 1037,260 1041,88'],
    ['', '', '1098,1127 1130,980 1160,810 1185,640 1205,490 1218,360 1223,250 1227,88']
];

// volume by price, [top, length from the right edge]
const profile = [[119, 1], [134, 1], [164, 5], [179, 26], [194, 72], [209, 281], [224, 117], [239, 654], [254, 1595], [269, 1490],
    [284, 755], [299, 862], [314, 678], [329, 423], [344, 266], [359, 216], [374, 43]];

const wtc = [
    '148,583 178,585 190,580 203,562 217,562 230,577 243,571 257,589 270,592 284,586 297,574 325,577 350,571 364,574 378,568 391,577 405,572 418,568 445,547 485,545 498,527 512,520 540,525 552,529 566,538 592,523 605,525 620,523 633,529 646,523 672,517 686,511 700,500 713,493 727,499 754,496 767,485 781,475 795,440 808,424 821,415 835,434 862,500 875,523 888,550 902,553 915,574 929,574 942,601 955,595 970,577 983,565 996,559 1010,562 1036,547 1050,565 1063,568 1076,563 1090,550 1103,535 1117,550 1130,562 1157,559 1170,574 1184,577 1197,571 1211,571 1237,556 1251,556 1278,547 1305,547 1318,529 1332,520 1345,517 1358,517 1372,511 1386,511 1399,499 1426,496 1440,490 1466,490 1480,478 1507,469 1533,472 1547,466 1560,466',
    '0,487 4,500 14,520 23,505 43,507 53,520 73,490 82,498 92,502 102,514 112,517 131,556 141,553 151,547 161,538 171,532 180,541 190,538 200,523 210,523 220,532 229,532 239,523 259,511 269,517 279,498 288,496 298,499 308,511 318,520 328,514 337,529 347,526 357,514 367,526 376,520 386,508 396,505 415,488 425,481 435,499 445,514 465,508 474,517 484,508 494,525 504,560 514,577 524,583 533,586 543,607 562,613 572,630 582,658 592,646 602,658 612,664 622,652 641,680 651,652 661,662 671,676 680,679 700,691 710,676 720,673 729,664 739,646 749,637 759,652 777,651 788,634 798,631 808,622 818,622 828,613 837,619 847,628 857,628 867,619 876,619 896,604 920,605 935,613 945,610 955,604 965,622 975,628 1003,628 1023,613 1033,607 1043,605 1053,607 1072,589 1092,586 1102,595 1111,595 1121,580 1141,577 1150,580 1180,580 1190,569 1210,553 1219,559 1229,550 1239,550 1258,577 1268,569 1278,577 1288,574 1298,566 1317,571 1337,592 1347,583 1357,566 1376,556'];

const vroc = [
    '148,1021 176,1021 203,1016 217,1018 230,1009 243,1018 257,1018 270,1024 284,1018 297,1018 310,1021 325,1021 338,1024 350,1021 364,1024 378,1018 391,1023 405,1021 418,1024 432,1021 445,1024 498,1024 512,1027 915,1027 942,1021 955,1021 970,1012 983,996 996,751 1010,940 1022,1012 1063,1015 1076,1021 1090,1009 1103,1024 1130,1021 1157,1024 1170,1018 1184,1024 1211,1024 1237,1021 1251,1024 1291,1024 1305,1021 1345,1021 1358,1015 1386,1020 1399,1018 1412,1020 1426,1018 1453,1018 1480,1021 1507,1018 1520,1024 1547,1024 1560,1021',
    '0,1012 14,1018 23,1015 33,1021 43,1015 73,1015 82,1010 92,1012 102,982 112,1018 122,1015 131,1006 141,1015 151,1018 161,1015 171,1021 210,1021 220,1024 229,1018 239,1024 259,1021 279,1021 288,1018 298,1018 308,1015 318,1018 328,1013 337,1003 347,1012 357,1015 367,1021 376,1015 396,1021 406,1015 416,1021 445,1015 455,1024 484,1021 494,1018 504,1006 514,1003 524,1012 533,1000 543,997 552,1000 562,1018 572,1006 582,1003 592,1012 602,1010 612,1018 632,1021 651,1012 661,1021 690,1018 700,1021 710,1012 720,1014 729,1009 749,1009 768,1018 788,1015 798,1009 808,1015 828,1021 857,1023 984,1024 994,1021 1003,1024 1092,1024 1101,1021 1111,1024 1121,1021 1131,1024 1141,1021 1161,1021 1170,1024 1180,1021 1190,1024 1200,1021 1210,1024 1219,1021 1229,1024 1249,1018 1258,1018 1268,1024 1278,1018 1288,1021 1308,1021 1317,1015 1337,1018 1357,1022 1376,1024'];

const rsi = [
    '125,142 137,145 148,160 159,146 171,133 182,133 194,178 205,169 216,203 228,203 238,188 262,173 273,190 285,178 296,184 319,184 330,196 341,179 353,179 364,157 385,158 398,166 409,157 421,139 432,136 443,151 454,154 466,163 478,181 489,163 502,163 512,169 523,166 534,178 545,163 571,160 580,151 591,136 602,130 613,154 625,145 636,157 647,143 659,136 670,113 681,112 692,103 706,163 728,221 739,241 750,248 760,249 772,259 784,263 795,275 818,241 841,220 852,230 863,214 874,214 886,233 908,221 931,196 954,223 965,214 977,218 988,233 1000,230 1011,223 1022,226 1033,208 1056,208 1067,196 1079,196 1090,203 1113,170 1124,160 1135,166 1147,160 1167,158 1180,145 1193,148 1203,145 1214,149 1225,142 1237,149 1248,133 1271,127 1282,145 1293,143 1304,136 1315,133 1326,214 1339,241 1350,205 1361,214 1373,217 1384,227 1395,206 1407,190 1418,206 1429,206 1440,223 1452,223 1463,244 1474,254 1486,241 1497,244 1509,223',
    '0,223 9,223 19,236 30,223 41,202 52,206 63,217 75,217 85,203 107,190 118,199 129,173 140,176 150,190 161,206 183,208 194,230 205,211 216,203 227,217 238,206 249,190 260,187 271,179 292,163 303,203 314,211 326,208 337,203 347,217 358,199 369,230 380,259 400,268 414,265 424,281 435,265 447,271 467,290 479,263 490,271 501,269 512,259 532,271 545,235 566,256 588,256 599,265 610,235 620,238 631,232 643,202 653,202 664,217 686,212 697,193 708,196 719,184 730,190 741,178 763,202 773,200 785,187 796,193 818,172 840,184 851,184 862,193 882,178 894,220 905,217 916,217 927,223 938,217 949,199 970,181 981,175 993,184 1003,169 1014,163 1036,157 1048,190 1058,181 1069,163 1091,163 1102,178 1113,166 1134,181 1145,156 1168,146 1179,166 1190,151 1201,163 1223,206 1233,188 1245,214 1266,187 1278,208 1288,199 1300,220 1311,223 1333,190 1355,184'];

const dmaLines = {
    white: [
        '125,482 137,475 159,470 171,462 194,457 228,457 250,461 273,461 285,467 319,472 341,465 385,462 409,457 432,445 454,437 523,437 545,447 571,452 613,448 636,445 659,438 670,430 692,408 706,406 726,407 739,417 750,428 772,453 790,500 806,540 829,572 852,587 870,590 897,586 908,577 931,564 942,563 954,567 965,562 988,569 1011,566 1045,572 1067,568 1090,561 1124,531 1158,511 1180,492 1214,469 1237,457 1259,437 1282,425 1315,418 1350,437 1384,465 1407,477 1429,492 1452,494 1474,508 1500,522',
        '0,527 19,541 35,550 57,554 75,550 100,542 118,537 129,532 161,526 183,521 227,524 249,528 271,524 292,511 326,502 358,493 380,510 400,537 435,573 454,600 467,622 479,638 501,655 523,674 545,680 555,685 600,685 625,680 643,667 670,651 686,632 708,606 741,574 773,557 796,539 829,516 855,505 882,488 910,484 955,490 1003,484 1036,470 1069,460 1113,457 1140,463 1168,457 1180,459 1200,457 1245,459 1266,464 1290,474 1311,488 1345,493 1355,490'],
    yellow: [
        '125,499 171,487 205,472 250,461 300,461 341,465 400,467 432,461 466,453 500,443 534,438 571,440 602,444 659,448 681,442 692,436 715,430 740,420 765,419 784,424 795,433 818,460 841,496 863,530 886,558 908,577 920,580 965,577 1000,570 1033,566 1067,569 1100,567 1135,560 1158,548 1180,535 1203,518 1237,493 1259,475 1282,460 1304,445 1326,436 1350,430 1384,432 1407,442 1440,463 1474,481 1486,491',
        '0,501 30,518 63,535 100,545 129,547 161,540 194,530 238,524 292,523 330,517 369,506 400,507 435,523 457,544 490,580 523,622 555,655 588,673 621,682 643,682 675,674 708,656 730,636 763,603 796,577 829,552 862,531 915,500 949,491 1014,487 1040,484 1069,476 1100,467 1140,461 1245,460 1290,461 1333,472 1355,482']
};

const volLines = {
    white: [
        '148,196 178,190 203,151 216,157 230,136 243,142 257,136 270,154 284,142 310,139 330,140 350,145 364,154 378,142 391,139 404,127 418,136 432,139 445,148 459,166 470,168 485,178 498,188 512,218 525,230 540,262 566,298 580,309 605,328 620,331 646,340 672,341 727,347 781,354 1560,354',
        '0,354 60,353 130,349 180,351 240,352 310,348 357,341 380,342 435,343 490,337 514,322 543,310 552,301 572,300 592,290 602,295 622,294 632,299 651,281 671,265 690,259 700,262 720,232 739,193 759,170 768,160 788,157 798,149 840,146 867,148 886,165 896,184 916,196 925,190 945,193 965,187 974,193 1003,193 1013,211 1033,226 1043,235 1053,241 1062,236 1092,241 1101,231 1111,238 1121,229 1161,231 1170,237 1190,236 1200,250 1229,250 1239,242 1249,212 1258,202 1268,200 1278,187 1288,188 1308,199 1327,196 1337,187 1366,190 1376,196'],
    yellow: [
        '148,227 178,214 203,184 230,163 243,166 257,157 297,142 325,140 338,149 350,148 364,152 378,141 404,137 432,148 470,148 498,160 512,184 525,196 540,214 566,241 580,262 592,274 605,290 633,316 659,331 700,339 754,346 835,354 1560,355',
        '0,354 70,353 240,352 310,349 370,344 440,343 500,339 540,323 560,314 592,301 602,297 632,295 651,288 671,280 690,278 702,271 739,228 749,220 768,197 798,163 818,154 847,146 867,149 886,155 896,163 916,175 925,176 945,187 965,190 984,193 1003,193 1020,204 1043,211 1082,232 1092,237 1111,233 1190,234 1200,241 1239,242 1258,230 1278,221 1308,202 1318,201 1337,188 1355,191 1376,196']
};

// [label, grid y, label y] inside each panel
const scales = {
    price: [['6000', 47], ['5500', 107], ['5000', 168], ['4500', 228], ['4000', 288], ['3500', 348]],
    vol: [['300万', 17], ['150万', 63]],
    wtc: [['5000', 59]],
    vroc: [['4000', 27], ['0', 107, 99]],
    rsi: [['100', 16], ['80', 35], ['50', 62], ['20', 90], ['0', 108, 100]],
    dma: [['0', 54]]
};

const months = [['04', 215], ['05', 341], ['06', 443], ['07', 569], ['08', 701], ['09', 833], ['10', 953], ['11', 1049],
    ['12', 1181], ['202201', 1319], ['02', 1433], ['03', 1529]];

function points(name, spans) {
    const p = panels[name];
    const list = [];
    spans.forEach((span, i) => {
        if (!span) return;
        const [x0, scale] = p.spans[i];
        for (const pair of span.split(' ')) {
            const [x, y] = pair.split(',').map(Number);
            list.push([+(x0 + x / scale - AXIS).toFixed(1), +(y / 3 - p.top).toFixed(1)]);
        }
    });
    return list;
}

function polyline(name, spans, cls) {
    return `<polyline class="${cls}" points="${points(name, spans).join(' ')}"/>`;
}

function curve(name, spans, cls) {
    const p = points(name, spans);
    let d = `M${p[0]}`;
    for (let i = 0; i < p.length - 1; i++) {
        const a = p[i - 1] || p[i], b = p[i], c = p[i + 1], e = p[i + 2] || c;
        const k = 7;
        d += `C${b[0] + (c[0] - a[0]) / k},${b[1] + (c[1] - a[1]) / k} ${c[0] - (e[0] - b[0]) / k},${c[1] - (e[1] - b[1]) / k} ${c}`;
    }
    return `<path class="${cls}" d="${d}"/>`;
}

function grid(name) {
    const right = name === 'dma' ? 55 : 57;
    const labels = scales[name].map(([text, y, ty]) => `<text x="${right}" y="${(ty || y) + 4}">${text}</text>`);
    document.getElementById(name + '-axis').innerHTML = labels.join('');
    return scales[name].map(s => `<line class="grid" x1="0" x2="100%" y1="${s[1] + .5}" y2="${s[1] + .5}"/>`).join('');
}

function drawCandles() {
    return candles.map((c, i) => {
        const [top, bottom, high, low] = c.y.map(v => Math.round(v / 3 - panels.price.top));
        const x = i * STEP;
        const wick = `<rect class="${c.up ? 'up-wick' : 'down'}" x="${x + 2}" y="${high}" width="1" height="${Math.max(low - high, 1)}"/>`;
        const h = Math.max(bottom - top, 1);
        if (c.up) return wick + `<rect class="up" x="${x + .5}" y="${top + .5}" width="4" height="${h}"/>`;
        return wick + `<rect class="down" x="${x}" y="${top}" width="5" height="${h}"/>`;
    }).join('');
}

function drawVolumes() {
    const base = 108;
    return volumes.map((v, i) => {
        const top = Math.round(v / 3 - panels.vol.top);
        const x = i * STEP;
        if (candles[i].up) return `<rect class="up" x="${x + .5}" y="${top + .5}" width="4" height="${base - top - 1}"/>`;
        return `<rect class="down" x="${x}" y="${top}" width="5" height="${base - top}"/>`;
    }).join('');
}

function drawPrice() {
    const svg = document.getElementById('price');
    const width = svg.clientWidth;
    let html = grid('price') + drawCandles();
    for (const cls in averages) html += curve('price', averages[cls], 'line ' + cls);
    for (const cls in sar) {
        const dots = points('price', sar[cls]).map(p => `<circle cx="${p[0]}" cy="${p[1]}" r="2"/>`);
        html += `<g class="dots ${cls}">${dots.join('')}</g>`;
    }
    for (const [x1, y1, x2, y2] of trends) html += `<line class="drawn" x1="${x1 - AXIS}" y1="${y1 - 67}" x2="${x2 - AXIS}" y2="${y2 - 67}"/>`;
    for (const arc of arcs) html += curve('price', arc, 'drawn');
    for (const [y, length] of profile) html += `<rect class="profile" x="${width - length}" y="${y - 67}" width="${length}" height="10"/>`;
    html += '<text class="callout" x="255" y="29">6198</text><path class="arrow" d="M285 24.500h11M293 22l3 2.500-3 2.500"/>';
    html += '<text class="callout" x="1029" y="321">3765</text><path class="arrow" d="M1059 316.500h12M1068 314l3 2.500-3 2.500"/>';
    svg.innerHTML = html;
}

drawPrice();
document.getElementById('vol').innerHTML = grid('vol') + drawVolumes() +
    polyline('vol', volLines.white, 'line white') + polyline('vol', volLines.yellow, 'line yellow');
document.getElementById('wtc').innerHTML = grid('wtc') + polyline('wtc', wtc, 'line white');
document.getElementById('vroc').innerHTML = grid('vroc') + polyline('vroc', vroc, 'line white');
document.getElementById('rsi').innerHTML = grid('rsi') + polyline('rsi', rsi, 'line pink') + polyline('rsi', rsi, 'line magenta dashed');
document.getElementById('dma').innerHTML = grid('dma') +
    polyline('dma', dmaLines.white, 'line white') + polyline('dma', dmaLines.yellow, 'line yellow');
document.getElementById('dates').innerHTML = '<text class="first" x="0" y="11">202102</text>' +
    months.map(([text, x]) => `<text x="${x - AXIS}" y="11">${text}</text>`).join('');
window.addEventListener('resize', drawPrice);

const asks = [['卖五', 4885, 113], ['卖四', 4884, 38], ['卖三', 4883, 82], ['卖二', 4882, 50], ['卖一', 4881, 113]];
const bids = [['买一', 4880, 68], ['买二', 4879, 249], ['买三', 4878, 373], ['买四', 4877, 106], ['买五', 4876, 90]];

function book(id, rows) {
    document.getElementById(id).innerHTML = rows.map(([name, price, size]) => {
        const best = name.endsWith('一') ? ' class="best"' : '';
        return `<div${best}><span>${name}</span><span class="deal rise">${price}</span><span class="size yellow">${size}</span></div>`;
    }).join('');
}
book('asks', asks);
book('bids', bids);

const stats = [
    ['最新', '4880', 'rise'], ['结算', '4886', 'rise'], ['涨跌', '30', 'rise'], ['昨结', '4850', 'white'],
    ['幅度', '0.62%', 'rise'], ['开盘', '4861', 'rise'], ['总手', '1865890', 'yellow'], ['最高', '4943', 'rise'],
    ['现手', '74', 'yellow'], ['最低', '4833', 'fall'], ['涨停', '5238', 'rise'], ['跌停', '4462', 'fall'],
    ['持仓', '1845374', 'yellow'], ['仓差', '-29472', 'yellow'], ['外盘', '928040', 'rise'], ['内盘', '937850', 'fall']
];
document.getElementById('stats').innerHTML = stats.map(([name, value, cls]) => `<span>${name}</span><b class="${cls}">${value}</b>`).join('');

// time, price, size, open interest change, kind (r = red, g = green)
const ticks = [
    ['14:55', 4860, 'g237', '+129', 'g空开'], [':26', 4861, 'r330', '-175', 'r空平'], [':31', 4860, 'g374', '-165', 'g多平'],
    [':54', 4865, 'g295', '+103', 'g空开'], ['14:56', 4867, 'g268', '+161', 'g空开'], ['14:57', 4870, 'g389', '+19', 'g空开'],
    [':21', 4870, 'g304', '-57', 'g多平'], [':25', 4872, 'g255', '-106', 'g多平'], [':47', 4869, 'r212', '+9', 'r多开'],
    ['14:58', 4871, 'g206', '-52', 'g多平'], [':28', 4873, 'r213', '+61', 'r多开'], ['14:59', 4873, 'r219', '+2', 'r多开'],
    [':13', 4873, 'r203', '+81', 'r多开'], [':20', 4873, 'g270', '-45', 'g多平'], [':23', 4875, 'r216', '-71', 'r空平'],
    [':25', 4874, 'g335', '-309', 'g多平'], [':25', 4875, 'r316', '-158', 'r空平'], [':26', 4875, 'r266', '-100', 'r空平'],
    [':29', 4876, 'r260', '+28', 'r多开'], [':36', 4878, 'g306', '-24', 'g多平'], [':52', 4878, 'g220', '-59', 'g多平'],
    [':52', 4879, 'r229', '-64', 'r空平'], [':56', 4879, 'r226', '+41', 'r多开']
];
const tone = s => s[0] === 'r' ? 'rise' : 'fall';
document.getElementById('ticks').innerHTML = ticks.map(([time, price, size, diff, kind]) => `<tr>
    <td class="time${time[0] === ':' ? ' second' : ''}">${time}</td>
    <td class="rise">${price}</td>
    <td class="${tone(size)}">${size.slice(1)}</td>
    <td class="yellow">${diff}</td>
    <td class="kind ${tone(kind)}">${kind.slice(1)}</td>
</tr>`).join('');
```
